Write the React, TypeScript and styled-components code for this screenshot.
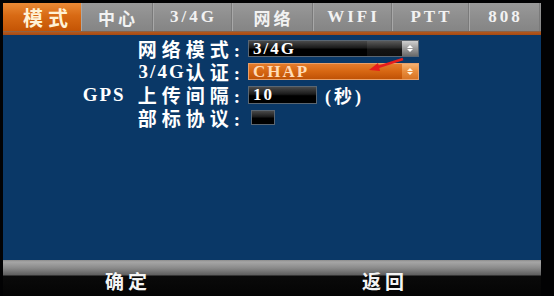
import React from 'react';
import styled, { createGlobalStyle } from 'styled-components';

const GlobalStyle = createGlobalStyle`
  html, body {
    margin: 0;
    padding: 0;
    background: #000;
  }
  body {
    width: 554px;
    height: 296px;
    overflow: hidden;
  }
`;

const FONT = `"Liberation Serif", "Noto Sans CJK SC", serif`;

const Page = styled.div`
  width: 554px;
  height: 296px;
  background: #020203;
  padding: 3px 0 0 3px;
  box-sizing: border-box;
`;

const Screen = styled.div`
  width: 538px;
  height: 293px;
  display: flex;
  flex-direction: column;
  font-family: ${FONT};
`;

const TabBar = styled.div`
  display: flex;
  height: 28px;
  background: linear-gradient(#999 0%, #8c8c8c 60%, #858585 100%);
`;

const Tab = styled.div<{ $w: number; $active?: boolean }>`
  width: ${(p) => p.$w}px;
  display: flex;
  align-items: center;
  justify-content: center;
  box-sizing: border-box;
  font-weight: bold;
  font-size: ${(p) => (p.$active ? 20 : 17)}px;
  letter-spacing: ${(p) => (p.$active ? 5 : 3)}px;
  color: ${(p) => (p.$active ? '#fff2d6' : '#f2f2f2')};
  background: ${(p) =>
    p.$active ? 'linear-gradient(#eb8a36 0%, #d86a14 45%, #c45404 100%)' : 'transparent'};
  border-left: ${(p) => (p.$active ? 'none' : '1px solid #a8a8a8')};
  border-right: ${(p) => (p.$active ? 'none' : '1px solid #7a7a7a')};
  padding-left: ${(p) => (p.$active ? 12 : 2)}px;
`;

const TabLine = styled.div`
  height: 4px;
  background: linear-gradient(#7a6a5c 0%, #b2561c 35%, #a44a14 100%);
`;

const Body = styled.div`
  position: relative;
  height: 225px;
  background: #0a3867;
`;

const Form = styled.div`
  display: grid;
  grid-template-columns: 242px auto;
  grid-auto-rows: 23px;
  column-gap: 3px;
  padding-top: 2px;
`;

const Label = styled.div`
  display: flex;
  align-items: center;
  justify-content: flex-end;
  color: #fff;
  font-size: 19px;
  font-weight: bold;
  letter-spacing: 5px;
  white-space: nowrap;
`;

const Latin = styled.span<{ $gap?: number }>`
  letter-spacing: 2px;
  margin-right: ${(p) => p.$gap ?? 0}px;
`;

const Field = styled.div`
  display: flex;
  align-items: center;
  gap: 8px;
`;

const Box = styled.div<{ $w: number; $orange?: boolean; $h?: number; $indent?: number }>`
  width: ${(p) => p.$w}px;
  height: ${(p) => p.$h ?? 17}px;
  margin-left: ${(p) => p.$indent ?? 0}px;
  box-sizing: border-box;
  display: flex;
  align-items: center;
  border: 1px solid ${(p) => (p.$orange ? '#e8a06a' : '#5a6672')};
  background: ${(p) =>
    p.$orange
      ? 'linear-gradient(#e47c2c 0%, #d66612 50%, #c05206 100%)'
      : 'linear-gradient(#4a4a4a 0%, #1a1a1a 45%, #000 55%, #000 100%)'};
  color: ${(p) => (p.$orange ? '#ffdcb8' : '#fff')};
  font-size: 17px;
  font-weight: bold;
  letter-spacing: 2px;
  overflow: hidden;
`;

const BoxText = styled.span`
  flex: 1;
  padding-left: 4px;
  line-height: 15px;
`;

const Tail = styled.div`
  width: 35px;
  height: 100%;
  background: linear-gradient(#5a5a5a 0%, #2a2a2a 45%, #141414 55%, #101010 100%);
`;

const Spinner = styled.div<{ $orange?: boolean }>`
  width: 16px;
  height: 100%;
  display: flex;
  flex-direction: column;
  align-items: center;
  justify-content: center;
  gap: 1px;
  background: ${(p) =>
    p.$orange
      ? 'linear-gradient(#f4b070 0%, #e88c3c 50%, #d87424 100%)'
      : 'linear-gradient(#d0d0d0 0%, #9a9a9a 50%, #6a6a6a 100%)'};
`;

const Tri = styled.div<{ $down?: boolean; $color: string }>`
  width: 0;
  height: 0;
  border-left: 3px solid transparent;
  border-right: 3px solid transparent;
  ${(p) =>
    p.$down
      ? `border-top: 3px solid ${p.$color};`
      : `border-bottom: 3px solid ${p.$color};`}
`;

const Unit = styled.span`
  color: #fff;
  font-size: 18px;
  font-weight: bold;
  letter-spacing: 3px;
`;

const Annotation = styled.svg`
  position: absolute;
  left: 360px;
  top: 22px;
  overflow: visible;
`;

const BottomBar = styled.div`
  height: 36px;
  display: grid;
  grid-template-columns: 250px 264px;
  background: linear-gradient(
    #8c8c8c 0px,
    #a6a6a6 2px,
    #8a8a8a 8px,
    #5e5e5e 15px,
    #0a0a0a 16px,
    #040404 100%
  );
`;

const Action = styled.div`
  display: flex;
  justify-content: center;
  padding-top: 7px;
  color: #f4f4f4;
  font-size: 19px;
  font-weight: bold;
  letter-spacing: 4px;
`;

const tabs = [
  { label: '模式', w: 78, active: true },
  { label: '中心', w: 72 },
  { label: '3/4G', w: 79 },
  { label: '网络', w: 81 },
  { label: 'WIFI', w: 79 },
  { label: 'PTT', w: 77 },
  { label: '808', w: 71 },
];

function Updown({ orange }: { orange?: boolean }) {
  const c = orange ? '#fff4e0' : '#fff';
  return (
    <Spinner $orange={orange}>
      <Tri $color={c} />
      <Tri $color={c} $down />
    </Spinner>
  );
}

export default function App() {
  return (
    <Page>
      <GlobalStyle />
      <Screen>
        <TabBar>
          {tabs.map((t) => (
            <Tab key={t.label} $w={t.w} $active={t.active}>
              {t.label}
            </Tab>
          ))}
        </TabBar>
        <TabLine />
        <Body>
          <Form>
            <Label>网络模式:</Label>
            <Field>
              <Box $w={171}>
                <BoxText>3/4G</BoxText>
                <Tail />
                <Updown />
              </Box>
            </Field>

            <Label>
              <Latin>3/4G</Latin>认证:
            </Label>
            <Field>
              <Box $w={171} $orange>
                <BoxText>CHAP</BoxText>
                <Updown orange />
              </Box>
            </Field>

            <Label>
              <Latin $gap={12}>GPS</Latin>上传间隔:
            </Label>
            <Field>
              <Box $w={69} $h={18}>
                <BoxText>10</BoxText>
              </Box>
              <Unit>(秒)</Unit>
            </Field>

            <Label>部标协议:</Label>
            <Field>
              <Box $w={24} $h={15} $indent={3} />
            </Field>
          </Form>
          <Annotation width="44" height="16" viewBox="0 0 44 16">
            <line x1="40" y1="2" x2="12" y2="11" stroke="#e81c1c" strokeWidth="2.5" />
            <polygon points="6,13 15,6 17,14" fill="#e81c1c" />
          </Annotation>
        </Body>
        <BottomBar>
          <Action>确定</Action>
          <Action>返回</Action>
        </BottomBar>
      </Screen>
    </Page>
  );
}
